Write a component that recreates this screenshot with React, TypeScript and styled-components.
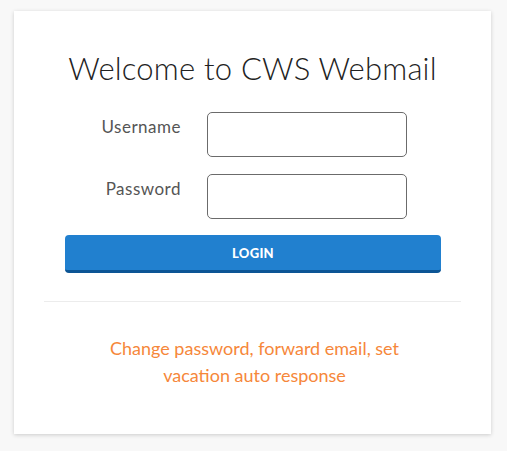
import React from "react";
import styled, { createGlobalStyle } from "styled-components";

const Global = createGlobalStyle`
  html, body { margin: 0; padding: 0; background: #f8f8f8; }
  body { font-family: Lato, "Open Sans", sans-serif; }
`;

const Page = styled.div`
  padding: 11px 16px 17px 14px;
`;

const Card = styled.div`
  background: #fff;
  height: 423px;
  box-sizing: border-box;
  padding: 0 30px;
  box-shadow: 0 1px 4px rgba(0, 0, 0, 0.18);
  display: flex;
  flex-direction: column;
`;

const Title = styled.h1`
  margin: 0;
  padding-top: 37px;
  font-size: 31px;
  line-height: 40px;
  font-weight: 300;
  letter-spacing: 0.2px;
  color: #222;
  text-align: center;
`;

const Form = styled.form`
  margin: 24px 20px 0 21px;
  display: flex;
  flex-direction: column;
  gap: 17px;
`;

const Row = styled.div`
  display: flex;
  align-items: flex-start;
`;

const Label = styled.label`
  width: 116px;
  margin-right: 26px;
  text-align: right;
  font-size: 17px;
  letter-spacing: 0.5px;
  line-height: 20px;
  padding-top: 5px;
  color: #555;
`;

const Input = styled.input`
  width: 200px;
  height: 45px;
  box-sizing: border-box;
  border: 1px solid #6b6b6b;
  border-radius: 5px;
  background: #fff;
  outline: none;
`;

const Button = styled.button`
  margin-top: -1px;
  height: 38px;
  box-sizing: border-box;
  border: none;
  border-bottom: 3px solid #0c5595;
  border-radius: 4px;
  background: #2180cf;
  color: #fff;
  font-family: Lato, sans-serif;
  font-weight: 900;
  font-size: 13px;
  letter-spacing: 0.3px;
  padding: 0;
`;

const Divider = styled.hr`
  margin: 28px 0 0;
  border: none;
  border-top: 1px solid #ececec;
`;

const Link = styled.a`
  margin-top: 33px;
  padding-left: 4px;
  text-align: center;
  font-size: 18px;
  line-height: 27px;
  color: #f6873a;
  text-decoration: none;
`;

export default function App() {
  return (
    <>
      <Global />
      <Page>
        <Card>
          <Title>Welcome to CWS Webmail</Title>
          <Form onSubmit={(e) => e.preventDefault()}>
            <Row>
              <Label htmlFor="u">Username</Label>
              <Input id="u" type="text" />
            </Row>
            <Row>
              <Label htmlFor="p">Password</Label>
              <Input id="p" type="password" />
            </Row>
            <Button type="submit">LOGIN</Button>
          </Form>
          <Divider />
          <Link href="#">
            Change password, forward email, set
            <br />
            vacation auto response
          </Link>
        </Card>
      </Page>
    </>
  );
}
